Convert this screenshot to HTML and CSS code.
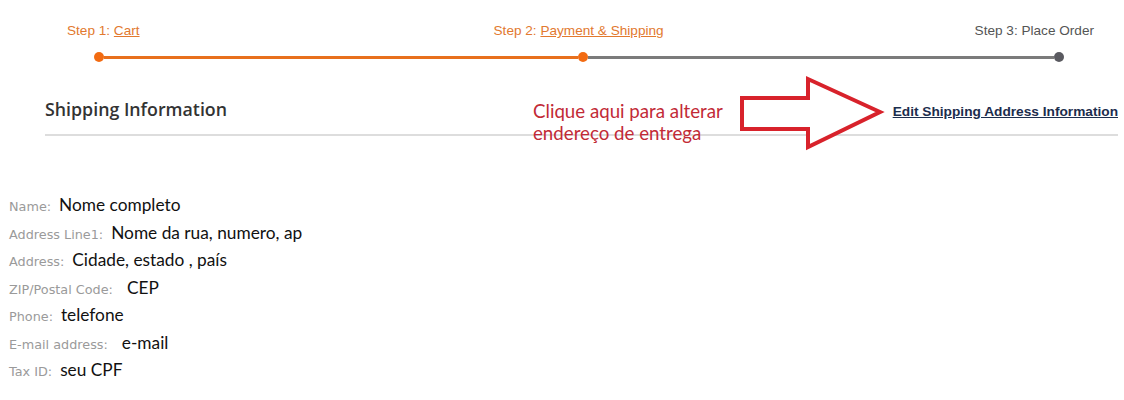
FILE: index.html
```html
<!DOCTYPE html>
<html lang="en">

<head>
    <meta charset="UTF-8">
    <meta name="viewport" content="width=device-width, initial-scale=1.0">
    <title>Checkout - Shipping</title>
    <link rel="stylesheet" href="styles.css">
</head>

<body>
    <div class="steps">
        <div class="step-labels">
            <span class="step-label s1">Step 1: <a href="#">Cart</a></span>
            <span class="step-label s2">Step 2: <a href="#">Payment &amp; Shipping</a></span>
            <span class="step-label s3">Step 3: Place Order</span>
        </div>
        <div class="track">
            <span class="dot done"></span>
            <span class="bar done"></span>
            <span class="dot done"></span>
            <span class="bar"></span>
            <span class="dot"></span>
        </div>
    </div>

    <div class="ship-head">
        <h2>Shipping Information</h2>
        <a href="#" class="edit-link">Edit Shipping Address Information</a>

        <div class="note">Clique aqui para alterar<br>endereço de entrega</div>
        <svg class="arrow" width="146" height="78" viewBox="740 74 146 78">
            <path d="M742 97 L808 97 L808 78 L880 111 L808 146 L808 128 L742 128 Z" fill="#fff" stroke="#d8222b" stroke-width="4" stroke-linejoin="miter"/>
        </svg>
    </div>

    <div class="fields">
        <div class="row"><span class="lbl">Name:</span><span class="val">Nome completo</span></div>
        <div class="row"><span class="lbl">Address Line1:</span><span class="val">Nome da rua, numero, ap</span></div>
        <div class="row"><span class="lbl">Address:</span><span class="val">Cidade, estado , país</span></div>
        <div class="row"><span class="lbl">ZIP/Postal Code:</span><span class="val wide">CEP</span></div>
        <div class="row"><span class="lbl">Phone:</span><span class="val">telefone</span></div>
        <div class="row"><span class="lbl">E-mail address:</span><span class="val wide">e-mail</span></div>
        <div class="row"><span class="lbl">Tax ID:</span><span class="val">seu CPF</span></div>
    </div>
</body>

</html>
```

FILE: styles.css
```css
body{
    margin: 0;
    background-color: #fff;
    font-family: "Liberation Sans", Arial, sans-serif;
    color: #333;
}
a{
    color: inherit;
}

/* steps */
.steps{
    padding-top: 23px;
}
.step-labels{
    display: flex;
    font-size: 13.6px;
    line-height: 16px;
    color: #e2792f;
}
.step-label.s1{
    margin-left: 67px;
}
.step-label.s2{
    margin-left: 354px;
}
.step-label.s3{
    margin-left: auto;
    margin-right: 30px;
    color: #555;
}
.track{
    display: flex;
    align-items: center;
    margin: 13px 60px 0 94px;
    height: 10px;
}
.dot{
    width: 10px;
    height: 10px;
    border-radius: 50%;
    background-color: #5a5a60;
    flex: none;
}
.dot.done{
    background-color: #f26b12;
}
.bar{
    flex: 1;
    height: 3px;
    background-color: #7b7b7b;
}
.bar.done{
    flex: none;
    width: 474px;
    background-color: #e8701d;
}

/* header */
.ship-head{
    position: relative;
    display: flex;
    align-items: center;
    justify-content: space-between;
    margin: 26px 6px 0 45px;
    height: 42px;
    padding-bottom: 4px;
    border-bottom: 2px solid #ddd;
}
.ship-head h2{
    margin: 0;
    font-family: "Open Sans", sans-serif;
    font-weight: 600;
    font-size: 17.8px;
    color: #333;
}
.edit-link{
    font-size: 13.7px;
    font-weight: bold;
    color: #1c2d4d;
    margin-top: 4px;
}
.note{
    position: absolute;
    left: 488px;
    top: 12px;
    font-family: "Lato", sans-serif;
    font-size: 18.7px;
    line-height: 22px;
    color: #c22a36;
}
.arrow{
    position: absolute;
    left: 695px;
    top: -13px;
}

/* fields */
.fields{
    padding: 55px 0 0 9px;
}
.row{
    display: flex;
    align-items: baseline;
    height: 27.5px;
    line-height: 27px;
}
.lbl{
    font-family: "DejaVu Sans", sans-serif;
    font-size: 12.8px;
    color: #9a9a9a;
}
.val{
    margin-left: 8px;
    font-family: "Lato", sans-serif;
    font-size: 17.3px;
    color: #111;
}
.val.wide{
    margin-left: 14px;
}
```
